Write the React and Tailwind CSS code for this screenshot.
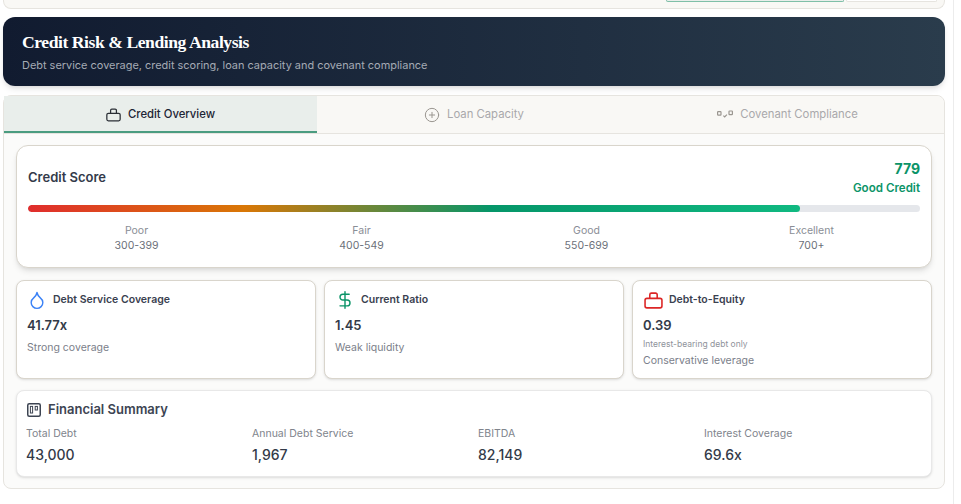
import React from 'react';
import { CirclePlus, DollarSign, Droplet } from 'lucide-react';

const sans = { fontFamily: 'Inter, sans-serif' };

// Low flat briefcase used by the first tab and the debt-to-equity card
const CaseIcon = ({ className }) => (
    <svg viewBox="0 0 18 16" fill="none" stroke="currentColor" strokeWidth="1.5" className={className}>
        <rect x="1" y="6" width="16" height="9" rx="1.8" />
        <path d="M5.5 6V2.5A1.5 1.5 0 0 1 7 1h4a1.5 1.5 0 0 1 1.5 1.5V6" />
    </svg>
);

const CovenantIcon = () => (
    <svg viewBox="0 0 16 10" fill="none" stroke="currentColor" strokeWidth="1.2" className="w-4 h-[10px] text-[#9a9690]">
        <rect x="0.6" y="1.6" width="3.4" height="3.6" rx="0.6" />
        <rect x="12" y="1" width="3.4" height="3.6" rx="0.6" />
        <path d="M6.4 5.6l1.3 1.3 2.2-2.2" />
    </svg>
);

const BoardIcon = () => (
    <svg viewBox="0 0 14 14" fill="none" stroke="currentColor" className="w-[14px] h-[14px] text-[#3d4452]">
        <rect x="0.75" y="0.75" width="12.5" height="12.5" rx="1.5" strokeWidth="1.5" />
        <rect x="3.4" y="3.4" width="2.2" height="6.6" strokeWidth="1" />
        <rect x="8.2" y="3.4" width="2.2" height="3.6" strokeWidth="1" />
    </svg>
);

const ranges = [
    { label: 'Poor', range: '300-399' },
    { label: 'Fair', range: '400-549' },
    { label: 'Good', range: '550-699' },
    { label: 'Excellent', range: '700+' },
];

const summary = [
    { label: 'Total Debt', value: '43,000' },
    { label: 'Annual Debt Service', value: '1,967' },
    { label: 'EBITDA', value: '82,149' },
    { label: 'Interest Coverage', value: '69.6x' },
];

const MetricCard = ({ icon, title, value, note, text }) => (
    <div className="h-[99px] rounded-lg border border-[#d9d5cc] bg-white px-[10px] pt-[9px] shadow-sm">
        <div className="flex items-center gap-[6px] pl-px h-5">
            {icon}
            <span className="text-[10.5px] font-semibold text-[#3a4150]">{title}</span>
        </div>
        <div className="mt-[5px] text-[13px] leading-5 font-semibold text-[#333a48]">{value}</div>
        {note && <div className="mt-[3px] text-[8.5px] leading-3 text-[#8f939b]">{note}</div>}
        <div className={`text-[10.5px] leading-4 text-[#7b808a] ${note ? 'mt-[3px]' : 'mt-[5px]'}`}>{text}</div>
    </div>
);

const App = () => {
    return (
        <div className="w-[961px] h-[504px] overflow-hidden bg-white" style={sans}>
            <div className="w-[954px] h-[504px] border-r border-[#ececec] pl-[3px] pr-2">
                {/* Tail of the toolbar scrolled off the top */}
                <div className="h-[9px] rounded-b-lg border border-t-0 border-[#e6e4df] bg-[#f9f8f5] flex justify-end gap-[2px] pr-[7px]">
                    <div className="w-[178px] h-[2px] rounded-b border-x border-b border-[#7fbfa8] bg-[#e9eeeb]"></div>
                    <div className="w-[91px] h-[2px] rounded-b border-x border-b border-[#e6e4df] bg-white"></div>
                </div>

                {/* Header */}
                <div className="mt-2 h-[69px] rounded-xl bg-gradient-to-r from-[#111b30] to-[#2a3c4c] pl-[19px] pt-[15px] shadow-md">
                    <h1 className="text-[17.6px] leading-5 font-bold tracking-tight text-white" style={{ fontFamily: '"Liberation Serif", serif' }}>
                        Credit Risk &amp; Lending Analysis
                    </h1>
                    <p className="mt-[5px] text-[10.95px] leading-4 text-[#a5abb5]">
                        Debt service coverage, credit scoring, loan capacity and covenant compliance
                    </p>
                </div>

                <div className="mt-[9px] h-[394px] rounded-lg border border-[#e6e4df] bg-[#fbfbfa]">
                    {/* Tabs */}
                    <div className="flex h-[38px] rounded-t-lg border-b border-[#e6e4df] bg-[#f9f8f5]">
                        <div className="w-[313px] h-[37px] pt-[2px] flex items-center justify-center gap-[7px] bg-[#e9eeeb] border-b-2 border-[#4a9c80] text-[11.3px] font-medium text-[#1c2434]">
                            <CaseIcon className="w-[15px] h-[14px] text-[#2b2f36]" />
                            Credit Overview
                        </div>
                        <div className="w-[314px] flex items-center justify-center gap-[7px] text-[11.3px] text-[#a9a8ab]">
                            <CirclePlus className="w-4 h-4 text-[#9a9690]" strokeWidth={1.5} />
                            Loan Capacity
                        </div>
                        <div className="flex-1 flex items-center justify-center gap-[7px] text-[11.3px] text-[#a9a8ab]">
                            <CovenantIcon />
                            Covenant Compliance
                        </div>
                    </div>

                    <div className="px-3 pt-3 -mt-px">
                        {/* Credit score */}
                        <div className="h-[123px] rounded-xl border border-[#d9d5cc] bg-white px-[11px] pt-[10px] shadow-md">
                            <div className="flex items-center justify-between h-[42px]">
                                <span className="mt-[2px] text-[13px] font-semibold text-[#333a4a]">Credit Score</span>
                                <div className="text-right">
                                    <div className="text-[14px] leading-5 font-bold text-[#0b9468]">779</div>
                                    <div className="mt-px text-[11.6px] leading-4 font-semibold text-[#0b9468]">Good Credit</div>
                                </div>
                            </div>
                            <div className="mt-[7px] h-[7px] rounded-full bg-[#e5e7eb] overflow-hidden">
                                <div className="h-full w-[772px] rounded-full bg-[linear-gradient(90deg,#e02d2d,#d97706_28%,#059669_60%,#10b981)]"></div>
                            </div>
                            <div className="mt-[11px] grid grid-cols-4 gap-2 text-center text-[10.5px] leading-[15px]">
                                {ranges.map((r) => (
                                    <div key={r.label}>
                                        <div className="text-[#8a8e96]">{r.label}</div>
                                        <div className="text-[#6b7079]">{r.range}</div>
                                    </div>
                                ))}
                            </div>
                        </div>

                        {/* Ratios */}
                        <div className="mt-3 grid grid-cols-3 gap-2">
                            <MetricCard
                                icon={<Droplet className="w-5 h-5 -ml-px text-[#3b82f6]" strokeWidth={1.7} />}
                                title="Debt Service Coverage"
                                value="41.77x"
                                text="Strong coverage"
                            />
                            <MetricCard
                                icon={<DollarSign className="w-5 h-5 -ml-px text-[#0b9468]" strokeWidth={1.7} />}
                                title="Current Ratio"
                                value="1.45"
                                text="Weak liquidity"
                            />
                            <MetricCard
                                icon={<CaseIcon className="w-[19px] h-[17px] text-[#dc2626]" />}
                                title="Debt-to-Equity"
                                value="0.39"
                                note="Interest-bearing debt only"
                                text="Conservative leverage"
                            />
                        </div>

                        {/* Summary */}
                        <div className="mt-[11px] h-[87px] rounded-lg border border-[#e8e8e8] bg-white px-[9px] pt-[10px] shadow-sm">
                            <div className="flex items-center gap-[7px] pl-px h-[18px]">
                                <BoardIcon />
                                <span className="text-[13px] font-semibold text-[#3d4452]">Financial Summary</span>
                            </div>
                            <div className="mt-[7px] grid grid-cols-4 gap-2">
                                {summary.map((s) => (
                                    <div key={s.label}>
                                        <div className="text-[10.5px] leading-4 text-[#80848c]">{s.label}</div>
                                        <div className="mt-[3px] text-[14px] leading-5 font-medium text-[#333a48]">{s.value}</div>
                                    </div>
                                ))}
                            </div>
                        </div>
                    </div>
                </div>
            </div>
        </div>
    );
};

export default App;
